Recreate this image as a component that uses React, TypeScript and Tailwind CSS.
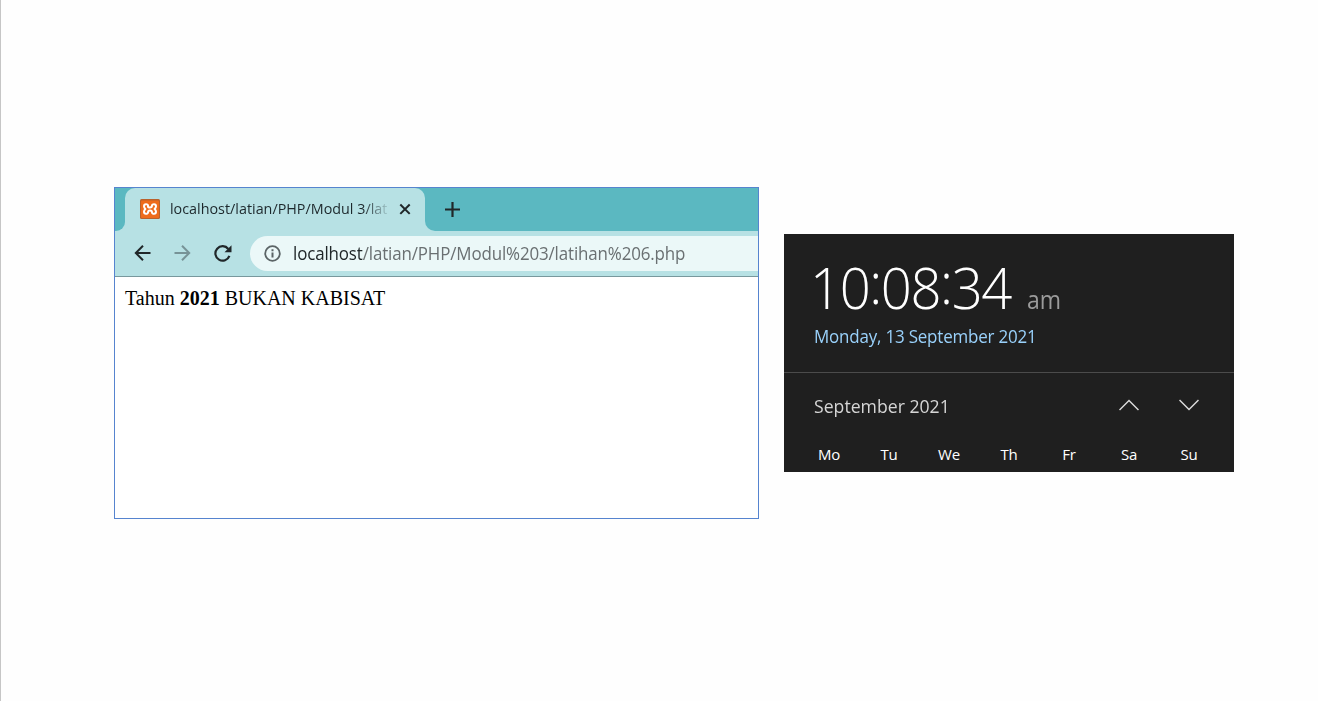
import React from "react";

const days = ["Mo", "Tu", "We", "Th", "Fr", "Sa", "Su"];

function XamppIcon() {
  return (
    <svg width="20" height="20" viewBox="0 0 20 20" className="shrink-0">
      <rect x="0" y="0" width="20" height="20" rx="1.5" fill="#b9622c" />
      <rect x="1" y="1.5" width="18" height="17.5" rx="1" fill="#ee6c1c" />
      <path
        d="M8 7.400V6.600C8 4.700 4 4.500 4 7.200c0 1.400.6 2 1.400 2.800C4.600 10.800 4 11.400 4 12.800c0 2.700 4 2.500 4 .6 0-1.200.8-1.900 2-1.900s2 .7 2 1.900c0 1.900 4 2.100 4-.6 0-1.400-.6-2-1.400-2.800.8-.8 1.400-1.400 1.400-2.800 0-2.700-4-2.500-4-.6 0 1.200-.8 1.900-2 1.900s-2-.5-2-1.100z"
        fill="none"
        stroke="#fff"
        strokeWidth="2"
        strokeLinecap="round"
        strokeLinejoin="round"
      />
    </svg>
  );
}

function Browser() {
  return (
    <div className="mt-[187px] flex h-[332px] w-[645px] shrink-0 flex-col overflow-hidden border border-[#5684cf] bg-white">
      <div className="flex h-[43px] shrink-0 bg-[#b7e1e4]">
        <div className="w-[10px] rounded-br-[9px] bg-[#5bb8c1]" />
        <div className="flex w-[300px] bg-[#5bb8c1]">
          <div className="flex w-full items-center rounded-t-[10px] bg-[#b7e1e4] pb-px pl-[15px]">
            <XamppIcon />
            <div className="-mr-[10px] ml-[10px] w-[229px] shrink-0 origin-left scale-x-[0.956] whitespace-nowrap bg-[linear-gradient(to_right,#1c272b_88%,transparent_101%)] bg-clip-text pb-[3px] text-[15px] leading-[22px] text-transparent">
              localhost/latian/PHP/Modul 3/lat
            </div>
            <svg width="12" height="12" viewBox="0 0 12 12" className="ml-[10px] shrink-0" stroke="#202729" strokeWidth="2">
              <path d="M1.300 1.500l9.400 9.400M10.700 1.500L1.300 10.900" />
            </svg>
          </div>
        </div>
        <div className="flex flex-1 items-center rounded-bl-[10px] bg-[#5bb8c1] pl-[20px]">
          <svg width="15" height="15" viewBox="0 0 15 15" stroke="#202729" strokeWidth="2.200">
            <path d="M0 7.500h15M7.500 0v15" />
          </svg>
        </div>
      </div>
      <div className="flex h-[46px] shrink-0 items-center border-b border-[#78989d] bg-[#b7e1e4] pl-[19px]">
        <svg width="17" height="16" viewBox="0 0 17 16" fill="none" stroke="#202729" strokeWidth="2" className="mb-px">
          <path d="M16.500 8H2M9 .8L1.800 8 9 15.200" />
        </svg>
        <svg width="17" height="16" viewBox="0 0 17 16" fill="none" stroke="#779397" strokeWidth="2" className="mb-px ml-[23px]">
          <path d="M.5 8H15M8 .8L15.200 8 8 15.200" />
        </svg>
        <svg width="18" height="17" viewBox="0 0 18 17" className="mb-px ml-[23px]">
          <path d="M14.300 4A7.200 7.200 0 1 0 15.400 10.800" fill="none" stroke="#202729" strokeWidth="2.200" />
          <path d="M17.500.3v7h-7z" fill="#202729" />
        </svg>
        <div className="ml-[18px] flex h-[35px] flex-1 items-center rounded-l-full bg-[#ebf8f8] pl-[14px]">
          <svg width="17" height="17" viewBox="0 0 17 17" className="shrink-0">
            <circle cx="8.500" cy="8.500" r="7.300" fill="none" stroke="#5b6466" strokeWidth="1.800" />
            <path d="M8.500 7.600v5M8.500 4.200v2" stroke="#5b6466" strokeWidth="2" />
          </svg>
          <div className="ml-[12px] origin-left scale-x-[0.941] whitespace-nowrap pb-[2px] text-[18px] leading-6 tracking-[-0.150px] text-[#6a7072]">
            <span className="text-[#202729]">localhost</span>/latian/PHP/Modul%203/latihan%206.php
          </div>
        </div>
      </div>
      <div className="whitespace-nowrap pl-[10px] pt-[10px] font-['Liberation_Serif',serif] text-[20px] leading-[23px] text-black">
        Tahun <b>2021</b> BUKAN KABISAT
      </div>
    </div>
  );
}

function Colon() {
  return <span className="inline-block -translate-y-[5px]">:</span>;
}

function Clock() {
  return (
    <div className="ml-[25px] mt-[234px] flex h-[238px] w-[450px] shrink-0 flex-col bg-[#1f1f1f]">
      <div className="flex h-[139px] shrink-0 flex-col border-b border-[#4b4b4b] pl-[30px] pt-[17px]">
        <div className="flex h-[73px] items-baseline whitespace-nowrap leading-[72px]">
          <span className="-ml-[4px] w-[204px] origin-left scale-x-[0.955] text-[57px] font-light tracking-[-1.500px] text-white">
            10<Colon />08<Colon />34
          </span>
          <span className="ml-[13px] origin-left scale-x-[0.920] text-[25px] text-[#9b9b9b]">am</span>
        </div>
        <div className="origin-left scale-x-[0.942] whitespace-nowrap text-[18px] leading-[24px] tracking-[-0.200px] text-[#99d1fb]">
          Monday, 13 September 2021
        </div>
      </div>
      <div className="flex h-[66px] items-center pl-[30px] pr-[35px]">
        <span className="flex-1 origin-left scale-x-[0.954] whitespace-nowrap text-[18.500px] text-[#d6d6d6]">September 2021</span>
        <svg width="20" height="12" viewBox="0 0 20 12" fill="none" stroke="#dadada" strokeWidth="1.500" className="mb-[2px]">
          <path d="M.5 11L10 1.500l9.500 9.500" />
        </svg>
        <svg width="20" height="12" viewBox="0 0 20 12" fill="none" stroke="#dadada" strokeWidth="1.500" className="mb-[2px] ml-[40px]">
          <path d="M.5 1L10 10.500 19.500 1" />
        </svg>
      </div>
      <div className="grid h-[30px] grid-cols-7 items-center pl-[15px] pr-[15px] text-center text-[15px] tracking-[-0.200px] text-white">
        {days.map((day) => (
          <span key={day}>{day}</span>
        ))}
      </div>
    </div>
  );
}

export default function App() {
  return (
    <main className="flex h-[701px] w-[1318px] items-start overflow-hidden border-l border-[#c6c6c6] bg-[#fefefe] pl-[113px] font-['Open_Sans','Noto_Sans',sans-serif]">
      <Browser />
      <Clock />
    </main>
  );
}
